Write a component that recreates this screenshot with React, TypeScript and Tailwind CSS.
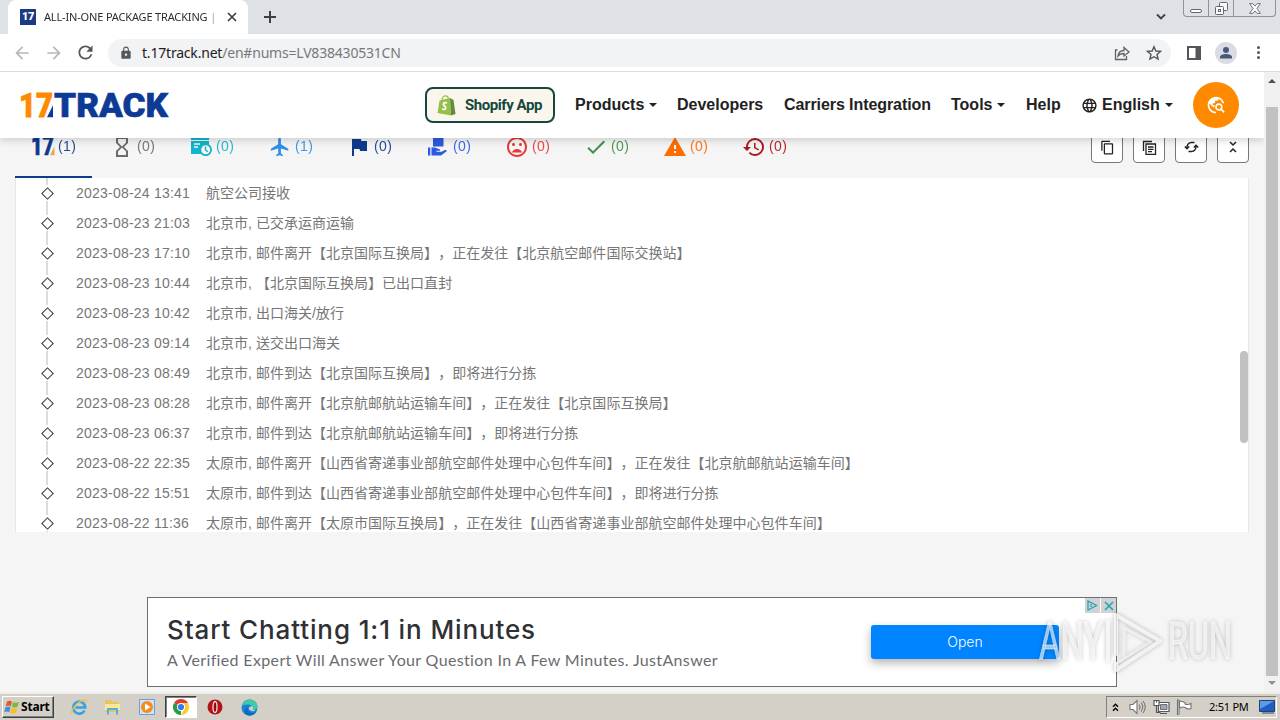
import React from 'react';
import clsx from 'clsx';
import {
  MdArrowBack,
  MdArrowForward,
  MdCheck,
  MdFlag,
  MdFlight,
  MdHistory,
  MdHourglassEmpty,
  MdLanguage,
  MdLock,
  MdMoodBad,
  MdOutlineContentCopy,
  MdRefresh,
  MdTravelExplore,
  MdWarning,
} from 'react-icons/md';

const EVENTS = [
  { time: '2023-08-24 13:41', text: '航空公司接收' },
  { time: '2023-08-23 21:03', text: '北京市, 已交承运商运输' },
  { time: '2023-08-23 17:10', text: '北京市, 邮件离开【北京国际互换局】，正在发往【北京航空邮件国际交换站】' },
  { time: '2023-08-23 10:44', text: '北京市, 【北京国际互换局】已出口直封' },
  { time: '2023-08-23 10:42', text: '北京市, 出口海关/放行' },
  { time: '2023-08-23 09:14', text: '北京市, 送交出口海关' },
  { time: '2023-08-23 08:49', text: '北京市, 邮件到达【北京国际互换局】，即将进行分拣' },
  { time: '2023-08-23 08:28', text: '北京市, 邮件离开【北京航邮航站运输车间】，正在发往【北京国际互换局】' },
  { time: '2023-08-23 06:37', text: '北京市, 邮件到达【北京航邮航站运输车间】，即将进行分拣' },
  { time: '2023-08-22 22:35', text: '太原市, 邮件离开【山西省寄递事业部航空邮件处理中心包件车间】，正在发往【北京航邮航站运输车间】' },
  { time: '2023-08-22 15:51', text: '太原市, 邮件到达【山西省寄递事业部航空邮件处理中心包件车间】，即将进行分拣' },
  { time: '2023-08-22 11:36', text: '太原市, 邮件离开【太原市国际互换局】，正在发往【山西省寄递事业部航空邮件处理中心包件车间】' },
];

const SeventeenIcon = () => (
  <svg className="shrink-0" width="24" height="36" viewBox="0 -6 24 36">
    <text x="0" y="20" textLength="23" lengthAdjust="spacingAndGlyphs" fontFamily="Roboto, sans-serif" fontWeight="900" fontSize="25" fill="#0c3a8d" stroke="#0c3a8d" strokeWidth=".6">17</text>
    <path d="M19 20.300l4.500-9v9z" fill="#e9a93b" />
  </svg>
);

const InfoIcon = () => (
  <svg width="24" height="24" viewBox="0 0 24 24">
    <path d="M2 1h18v4H2zM2 6h18v4a6 6 0 0 0-7 9H2z" fill="#12b5c9" />
    <path d="M5 9h6M5 12h4" stroke="#f5f5f5" strokeWidth="1.4" />
    <circle cx="16.7" cy="14.7" r="5.4" fill="#f5f5f5" stroke="#12b5c9" strokeWidth="1.8" />
    <path d="M16.5 11.5v3.5l2.4 1.8" fill="none" stroke="#12b5c9" strokeWidth="1.4" />
  </svg>
);

const DeliverIcon = () => (
  <svg width="24" height="24" viewBox="0 0 24 24" fill="#2b5be0">
    <path d="M7 1h10.500v10.500H7zM2 12.500h2.300v8H2zM5.500 12.500H9l5 2v1.300h-3.500v1h5l4-2 1.500 1.200-6 4.500H5.500z" />
  </svg>
);

const STATUSES = [
  { icon: <SeventeenIcon />, count: 1, color: 'text-[#0c3a8d]', active: true },
  { icon: <MdHourglassEmpty size={24} />, count: 0, color: 'text-[#6b6b6b]' },
  { icon: <InfoIcon />, count: 0, color: 'text-[#12b5c9]' },
  { icon: <MdFlight size={22} />, count: 1, color: 'text-[#2e8fea]' },
  { icon: <MdFlag size={24} />, count: 0, color: 'text-[#0f3a8c]' },
  { icon: <DeliverIcon />, count: 0, color: 'text-[#2b5be0]' },
  { icon: <MdMoodBad size={24} />, count: 0, color: 'text-[#e53935]' },
  { icon: <MdCheck size={24} />, count: 0, color: 'text-[#3f8f46]' },
  { icon: <MdWarning size={24} />, count: 0, color: 'text-[#ff6d00]' },
  { icon: <MdHistory size={24} />, count: 0, color: 'text-[#b0151c]' },
];

function BrowserTabs() {
  return (
    <div className="flex h-[34px] shrink-0 bg-[#dee1e6] font-['Noto_Sans','Open_Sans',sans-serif]">
      <div className="ml-2 flex w-[240px] items-center rounded-t-lg bg-white pl-3 pr-[10px]">
        <div className="flex h-4 w-4 items-center justify-center bg-[#1c3a85] font-[Roboto] text-[11px] font-black tracking-[-0.5px] text-white">17</div>
        <div className="ml-2 w-[174px] overflow-hidden whitespace-nowrap text-[11px] tracking-[-0.16px] text-[#2b2d30] [mask-image:linear-gradient(to_right,black_94%,transparent)]">
          ALL-IN-ONE PACKAGE TRACKING | 17TRACK
        </div>
        <svg className="ml-[9px]" width="10" height="10" viewBox="0 0 10 10" stroke="#3c4043" strokeWidth="1.7">
          <path d="M1 1l8 8M9 1l-8 8" />
        </svg>
      </div>
      <svg className="ml-4 mt-[11px]" width="12" height="12" viewBox="0 0 12 12" stroke="#3c4043" strokeWidth="2">
        <path d="M6 0v12M0 6h12" />
      </svg>
      <svg className="ml-auto mt-[13px]" width="10" height="8" viewBox="0 0 10 8" fill="none" stroke="#3c4043" strokeWidth="1.8">
        <path d="M1 1.5l4 4 4-4" />
      </svg>
      <div className="ml-[17px] mr-1 flex h-[17px] w-[93px] overflow-hidden rounded-b border border-t-0 border-[#8e9197]">
        <div className="flex w-[25px] items-end justify-center border-r border-[#8e9197] pb-[3px]">
          <div className="h-1 w-3 rounded-sm border border-[#62666d] bg-white" />
        </div>
        <div className="flex w-[25px] items-center justify-center border-r border-[#8e9197]">
          <svg width="13" height="13" viewBox="0 0 13 13" fill="#f8f9fa" stroke="#62666d">
            <rect x="4.5" y=".5" width="8" height="8" rx="1" />
            <rect x=".5" y="4.5" width="8" height="8" rx="1" />
            <rect x="3.5" y="7.5" width="2" height="2" />
          </svg>
        </div>
        <div className="flex flex-1 items-center justify-center">
          <svg width="12" height="11" viewBox="0 0 12 11" fill="#f8f9fa" stroke="#62666d" strokeWidth=".9">
            <path d="M.6.6h3.2L6 3 8.200.6h3.200L8 5.500l3.400 4.900H8.200L6 8 3.800 10.400H.6L4 5.500z" />
          </svg>
        </div>
      </div>
    </div>
  );
}

function AddressBar() {
  return (
    <div className="flex h-[38px] shrink-0 items-center border-b border-[#dadce0] bg-white">
      <MdArrowBack size={20} className="ml-3 text-[#b6b8bb]" />
      <MdArrowForward size={20} className="ml-3 text-[#b6b8bb]" />
      <MdRefresh size={21} className="ml-[11px] text-[#53565a]" />
      <div className="ml-3 flex h-7 w-[1063px] items-center rounded-full bg-[#f1f3f4] pl-[11px] pr-[9px]">
        <MdLock size={14} className="text-[#54575b]" />
        <div className="ml-[9px] font-['Noto_Sans','Open_Sans',sans-serif] text-sm tracking-[-0.2px] text-[#75797d]">
          <span className="text-[#1f2023]">t.17track.net</span>/en#nums=LV838430531CN
        </div>
        <svg className="ml-auto" width="16" height="16" viewBox="0 0 16 16" fill="none" stroke="#5f6368" strokeWidth="1.3">
          <path d="M3.500 5H1.500v9.500h11V11" />
          <path d="M4 11c.5-4 3-5.500 6-5.500V2.500l5 4.500-5 4V8.500c-2.500 0-4.500.5-6 2.500z" />
        </svg>
        <svg className="ml-4" width="16" height="16" viewBox="0 0 16 16" fill="none" stroke="#53565a" strokeWidth="1.4">
          <path d="M8 1.700l1.900 4.300 4.600.4-3.500 3.100 1.100 4.600L8 11.700l-4.100 2.400L5 9.500 1.500 6.400l4.600-.4z" />
        </svg>
      </div>
      <svg className="ml-4" width="14" height="14" viewBox="0 0 14 14" fill="#53565a">
        <path d="M0 0h14v14H0zM2 2v10h6.500V2z" fillRule="evenodd" />
      </svg>
      <div className="ml-[14px] flex h-[22px] w-[22px] items-center justify-center rounded-full bg-[#d9dde3]">
        <svg width="14" height="14" viewBox="0 0 14 14" fill="#49597d">
          <circle cx="7" cy="4" r="3" />
          <path d="M1 12.500V11c0-2 3-3 6-3s6 1 6 3v1.500z" />
        </svg>
      </div>
      <div className="ml-5 flex flex-col gap-[2px]">
        <div className="h-[3px] w-[3px] rounded-full bg-[#53565a]" />
        <div className="h-[3px] w-[3px] rounded-full bg-[#53565a]" />
        <div className="h-[3px] w-[3px] rounded-full bg-[#53565a]" />
      </div>
    </div>
  );
}

const Caret = () => <span className="ml-[5px] border-x-4 border-t-4 border-x-transparent border-t-[#222]" />;

function SiteHeader() {
  return (
    <header className="relative z-10 flex h-[66px] shrink-0 items-center bg-white pl-5 pr-[25px] shadow-[0_2px_8px_rgba(0,0,0,0.18)]">
      <svg width="150" height="48" viewBox="0 0 150 48" fontFamily="Roboto, sans-serif" fontWeight="900" fontSize="33.5">
        <text x="-1" y="36" textLength="34" lengthAdjust="spacingAndGlyphs" fill="#ff8a00" stroke="#ff8a00" strokeWidth=".8">17</text>
        <path d="M27 36.300l6-12v12z" fill="#0c3a94" />
        <text x="34" y="36" textLength="114" lengthAdjust="spacingAndGlyphs" fill="#0c3a94" stroke="#0c3a94" strokeWidth=".6">TRACK</text>
      </svg>
      <div className="ml-[255px] flex h-9 w-[130px] items-center rounded-lg border-2 border-[#14483c] bg-[#faf6ee] pl-[10px]">
        <svg width="19" height="21" viewBox="0 0 19 21">
          <path d="M2.500 5.500L13 3l1 17.500L.5 18z" fill="#95bf47" />
          <path d="M13 3l3.500 2L18.500 19 14 20.500z" fill="#5e8e3e" />
          <path d="M5 5c.5-5 5.500-5.500 6.500-1.500" fill="none" stroke="#95bf47" strokeWidth="1.200" />
          <path d="M10 8c-3-1.300-4.500 1-3 2.500 1.800 1.600 2.200 2 1.200 3.500-.6.800-2 .6-3-.3" fill="none" stroke="#fff" strokeWidth="1.700" />
        </svg>
        <span className="ml-[9px] whitespace-nowrap font-[Roboto] text-[15px] font-bold tracking-[-0.45px] text-[#14483c]">Shopify App</span>
      </div>
      <nav className="ml-5 flex items-center whitespace-nowrap font-['Liberation_Sans',Arial,sans-serif] text-base font-bold text-[#222]">
        <span className="flex w-[102px] items-center">Products<Caret /></span>
        <span className="w-[107px]">Developers</span>
        <span className="w-[167px] tracking-[-0.08px]">Carriers Integration</span>
        <span className="flex w-[75px] items-center">Tools<Caret /></span>
        <span className="w-[55px]">Help</span>
        <span className="flex items-center"><MdLanguage size={17} className="mr-1" />English<Caret /></span>
      </nav>
      <div className="ml-auto flex h-[46px] w-[46px] shrink-0 items-center justify-center rounded-full bg-[#ff8a00]">
        <MdTravelExplore size={20} color="#fff" />
      </div>
    </header>
  );
}

function StatusBar() {
  const button = 'flex h-8 w-8 items-center justify-center rounded-sm border border-[#777] bg-white text-[#222]';
  return (
    <div className="flex h-10 shrink-0 overflow-hidden px-[15px]">
      <div className="flex gap-[2px]">
        {STATUSES.map((status, i) => (
          <div
            key={i}
            className={clsx(
              'flex w-[77px] items-center justify-center gap-[3px] border-b-2 pb-[21px]',
              status.active ? 'border-[#0f3b8f]' : 'border-transparent',
              status.color,
            )}
          >
            <div className="flex h-6 w-6 items-center justify-center">{status.icon}</div>
            <span className="-mt-px w-[18px] font-['Liberation_Sans',Arial,sans-serif] text-sm leading-4 tracking-[0.4px] opacity-90">({status.count})</span>
          </div>
        ))}
      </div>
      <div className="-mt-[7px] ml-auto flex gap-[10px]">
        <div className={button}><MdOutlineContentCopy size={15} /></div>
        <div className={button}>
          <svg width="15" height="15" viewBox="0 0 15 15" fill="none" stroke="#222" strokeWidth="1.300">
            <path d="M1.500 11V1.500H10M4 4h9.500v10.300H4zM6 7h5.500M6 9.300h5.500M6 11.600h4" />
          </svg>
        </div>
        <div className={button}>
          <svg width="15" height="12" viewBox="0 0 15 12" fill="none" stroke="#222" strokeWidth="1.400">
            <path d="M3 7.500C2.500 3.500 5 1.500 7.500 1.500h3M12 4.500c.5 4-2 6-4.500 6h-3" />
            <path d="M.8 5.500L3 7.800l2.200-2.300M9.800 6.500L12 4.200l2.200 2.300" />
          </svg>
        </div>
        <div className={button}>
          <svg width="8" height="12" viewBox="0 0 8 12" fill="none" stroke="#222" strokeWidth="1.500">
            <path d="M1 1l3 3 3-3M1 11l3-3 3 3" />
          </svg>
        </div>
      </div>
    </div>
  );
}

function EventList() {
  return (
    <div className="mx-[15px] flex h-[354px] shrink-0 overflow-hidden border-x border-[#e6e6e6] bg-white">
      <div className="flex-1">
        {EVENTS.map((event) => (
          <div key={event.time} className="flex h-[30px] items-center whitespace-nowrap font-['Liberation_Sans','Noto_Sans_CJK_SC',sans-serif] text-sm leading-[30px] text-[#767676]">
            <div className="ml-[25px] flex h-[30px] w-3 flex-col items-center justify-between">
              <div className="h-[7px] w-[2px] bg-[#dcdcdc]" />
              <div className="h-[9px] w-[9px] rotate-45 border-[1.500px] border-[#333]" />
              <div className="h-[7px] w-[2px] bg-[#dcdcdc]" />
            </div>
            <span className="ml-[23px] w-[130px] tracking-[0.22px]">{event.time}</span>
            <span className="tracking-[0.02px] [text-spacing-trim:space-all]">{event.text}</span>
          </div>
        ))}
      </div>
      <div className="mt-[173px] h-[92px] w-2 rounded bg-[#c1c1c1]" />
    </div>
  );
}

function AdBanner() {
  return (
    <div className="ml-[147px] mt-[65px] flex h-[90px] w-[970px] shrink-0 border border-[#707070] bg-white">
      <div className="ml-[19px] mt-[14px] w-[704px] whitespace-nowrap">
        <div className="font-[Inter,sans-serif] text-[26px] font-medium leading-9 tracking-[0.88px] text-[#303134]">Start Chatting 1:1 in Minutes</div>
        <div className="-mt-px font-[Lato,sans-serif] text-base leading-[26px] tracking-[0.35px] text-[#6a6c70]">A Verified Expert Will Answer Your Question In A Few Minutes. JustAnswer</div>
      </div>
      <div className="mt-[27px] flex h-[34px] w-[188px] items-center justify-center rounded-[3px] bg-[#0084ff] font-[Inter,sans-serif] text-sm font-light text-white shadow-[0_4px_10px_rgba(0,0,0,0.3)]">
        Open
      </div>
      <div className="ml-auto flex gap-px">
        <div className="flex h-[15px] w-[15px] items-center justify-center bg-[#d0d2d3]">
          <svg width="11" height="11" viewBox="0 0 11 11" fill="none" stroke="#23a6b5" strokeWidth="1.300">
            <path d="M1 1v9l8.500-4.500zM4 4v3" />
          </svg>
        </div>
        <div className="flex h-[15px] w-[15px] items-center justify-center bg-[#d0d2d3]">
          <svg width="10" height="10" viewBox="0 0 10 10" stroke="#23a6b5" strokeWidth="1.700">
            <path d="M1 1l8 8M9 1l-8 8" />
          </svg>
        </div>
      </div>
    </div>
  );
}

function PageScrollbar() {
  return (
    <div className="flex w-4 shrink-0 flex-col items-center bg-[#f1f1f1]">
      <div className="mt-[7px] border-x-4 border-b-4 border-x-transparent border-b-[#505050]" />
      <div className="mt-6 h-[569px] w-3 bg-[#c1c1c1]" />
      <div className="mt-[5px] border-x-4 border-t-4 border-x-transparent border-t-[#909090]" />
    </div>
  );
}

function Watermark() {
  return (
    <svg className="absolute left-[1036px] top-[602px] drop-shadow-[0_0_2px_rgba(0,0,0,0.35)]" width="200" height="78" viewBox="0 -4 200 78" fontFamily="Roboto, sans-serif" fontSize="51" fill="#fff" fillOpacity=".6" stroke="#fff" strokeOpacity=".5">
      <text x="3" y="53" textLength="64" lengthAdjust="spacingAndGlyphs">ANY</text>
      <text x="132" y="53" textLength="64" lengthAdjust="spacingAndGlyphs">RUN</text>
      <g fill="none" strokeLinejoin="round" strokeLinecap="round">
        <path d="M72 16v38M80 48V9l44 26-44 29v-6" strokeWidth="4" strokeOpacity=".75" />
        <path d="M88 50V22l27 14-34 21" strokeWidth="3" strokeOpacity=".5" />
      </g>
    </svg>
  );
}

function WindowsFlag() {
  return (
    <svg width="16" height="16" viewBox="0 0 16 16">
      <path d="M3 2.500c2-1.300 3.500-1 5 0L6.800 7.300c-1.500-1-3-1-5 0z" fill="#e8552b" />
      <path d="M9 3c2 1 3.500 1 6-.3L13.600 7.500c-2 1.300-4 1.200-5.800.3z" fill="#7cb937" />
      <path d="M1.500 8.300c2-1 3.500-1 5 0l-1.300 5c-1.500-1-3-1-5 0z" fill="#3f8fdc" />
      <path d="M7.500 8.800c2 1 3.800 1 5.800 0L12 13.500c-2 1.200-4 1.200-5.800.3z" fill="#f7bd27" />
    </svg>
  );
}

function Taskbar() {
  return (
    <div className="flex h-7 shrink-0 items-center border-t-2 border-t-[#efede8] bg-[#d4d0c8] pl-[2px] pr-[3px]">
      <div className="flex h-[22px] w-[52px] items-center border border-b-[#404040] border-l-white border-r-[#404040] border-t-white pl-px shadow-[inset_-1px_-1px_0_#808080]">
        <WindowsFlag />
        <span className="ml-px font-['Noto_Sans','Open_Sans',sans-serif] text-xs font-bold tracking-[-0.2px] text-black">Start</span>
      </div>
      {/* Internet Explorer */}
      <svg className="ml-4" width="18" height="18" viewBox="0 0 18 18" fill="none">
        <path d="M14.500 12.500a6 6 0 1 1 .7-3H5.500" stroke="#35a3e3" strokeWidth="2.600" />
        <path d="M2 15.500C0 13 8 2.500 15 2c2-.1 2 1.500 1 3.500" stroke="#ecc14d" strokeWidth="1.400" />
      </svg>
      {/* File Explorer */}
      <svg className="ml-4" width="17" height="16" viewBox="0 0 17 16">
        <path d="M1 1h6l1 2h7v10H1z" fill="#e6c65b" />
        <path d="M1 5h15v6H1z" fill="#f8e79c" />
        <path d="M4 15.500V10h9v5.500" fill="none" stroke="#5aaedd" strokeWidth="2" />
      </svg>
      {/* Media Player */}
      <svg className="ml-[18px]" width="16" height="16" viewBox="0 0 16 16">
        <path d="M.5.5h15v15H.5z" fill="#cfe4f6" stroke="#6ba0cf" />
        <circle cx="8" cy="8" r="6" fill="#f68b1f" />
        <path d="M6 4.500v7L11.500 8z" fill="#fff" />
      </svg>
      <div className="ml-[10px] flex h-[22px] w-8 items-center justify-center border border-b-white border-l-[#404040] border-r-white border-t-[#404040] bg-white shadow-[inset_1px_1px_0_#808080]">
        <svg width="16" height="16" viewBox="0 0 16 16">
          <path d="M8 8L1.070 4A8 8 0 0 1 14.930 4z" fill="#e33b2e" />
          <path d="M8 8v8A8 8 0 0 1 1.070 4z" fill="#279b48" />
          <path d="M8 4h6.930A8 8 0 0 1 8 16l3.500-6z" fill="#fcc934" />
          <circle cx="8" cy="8" r="4" fill="#fff" />
          <circle cx="8" cy="8" r="3.100" fill="#2f7de9" />
        </svg>
      </div>
      {/* Opera */}
      <svg className="ml-[10px]" width="16" height="16" viewBox="0 0 16 16">
        <circle cx="8" cy="8" r="7.500" fill="#b31217" />
        <ellipse cx="8" cy="8" rx="2" ry="5.500" fill="#8e0b10" stroke="#f4dcdc" strokeWidth="1.300" />
      </svg>
      {/* Edge */}
      <svg className="ml-[18px]" width="17" height="17" viewBox="0 0 17 17">
        <circle cx="8.500" cy="8.500" r="8" fill="#1682d8" />
        <path d="M1 7c1-5 5-6.500 8-6.500 5 0 7.800 4 7.500 7.500-.4 3-4 3.500-6 2.500 1.500-2 .5-5-3-5C4.500 5.500 2 6 1 7z" fill="#41c9a5" />
        <path d="M7 8c-2 3 1 6.500 5 6 1.200-.1 2.500-.7 3.300-1.500C13 17.500 7 17.500 4.500 15 2.500 12.500 4 9 7 8z" fill="#0f66bd" />
        <path d="M8 8.500c-.8 2.500 2.500 4.500 6.500 3.300l-3-1.300c1-1.500.2-3-1-3.500z" fill="#d4d0c8" />
      </svg>
      <div className="ml-auto flex h-[22px] w-[171px] items-center border border-b-white border-l-[#808080] border-r-white border-t-[#808080] pl-[5px] pr-px">
        <svg width="7" height="9" viewBox="0 0 7 9" fill="none" stroke="#000" strokeWidth="1.400">
          <path d="M1 3.800L3.500 1.300 6 3.800M1 7.800l2.500-2.500L6 7.800" />
        </svg>
        <svg className="ml-[10px]" width="17" height="16" viewBox="0 0 17 16" fill="none" stroke="#74767a" strokeWidth="1.100">
          <path d="M1 5.500h3l4-4v13l-4-4H1z" fill="#fff" />
          <path d="M10 5.500q2 2.500 0 5M12 3.500q3.500 4.500 0 9M14 2q4.500 6 0 12" />
        </svg>
        <svg className="ml-[7px]" width="17" height="16" viewBox="0 0 17 16" stroke="#55585c" strokeWidth="1.200">
          <path d="M5.500 3.500h10.500v9H5.500z" fill="#fff" />
          <path d="M7.500 5.500h6.500v5H7.500z" fill="#a4a8ad" strokeWidth=".8" />
          <path d="M1 1.500h5v5H1z" fill="#fff" />
          <path d="M7 14.500h7M3.500 6.500v7h4M3.500 1.500v2" fill="none" />
        </svg>
        <svg className="ml-[6px]" width="16" height="16" viewBox="0 0 16 16" fill="#fff" stroke="#707276" strokeWidth="1.100">
          <path d="M2.500 15.500h-1V1h1.500v14.500M3.500 2.500c3-1.200 3.500 1 5.500 1v1.500c2 1 4 .5 6-.5v5c-3 1.500-4 0-6-1s-3.500-.5-5.500.5z" />
        </svg>
        <span className="ml-[17px] whitespace-nowrap font-['Noto_Sans','Open_Sans',sans-serif] text-[11px] tracking-[-0.25px] text-black">2:51 PM</span>
        <svg className="ml-auto" width="16" height="14" viewBox="0 0 16 14">
          <path d="M.5.5h15v11H.5z" fill="#1f5fc4" stroke="#224277" />
          <path d="M1 1h14L1 9z" fill="#5b9bea" />
          <path d="M3 13h12" stroke="#30486f" />
        </svg>
      </div>
    </div>
  );
}

export default function App() {
  return (
    <div className="relative flex h-[720px] w-[1280px] flex-col overflow-hidden bg-[#f5f5f5]">
      <BrowserTabs />
      <AddressBar />
      <div className="flex h-[620px] shrink-0">
        <main className="flex w-[1264px] flex-col overflow-hidden">
          <SiteHeader />
          <StatusBar />
          <EventList />
          <AdBanner />
        </main>
        <PageScrollbar />
      </div>
      <Taskbar />
      <Watermark />
    </div>
  );
}
